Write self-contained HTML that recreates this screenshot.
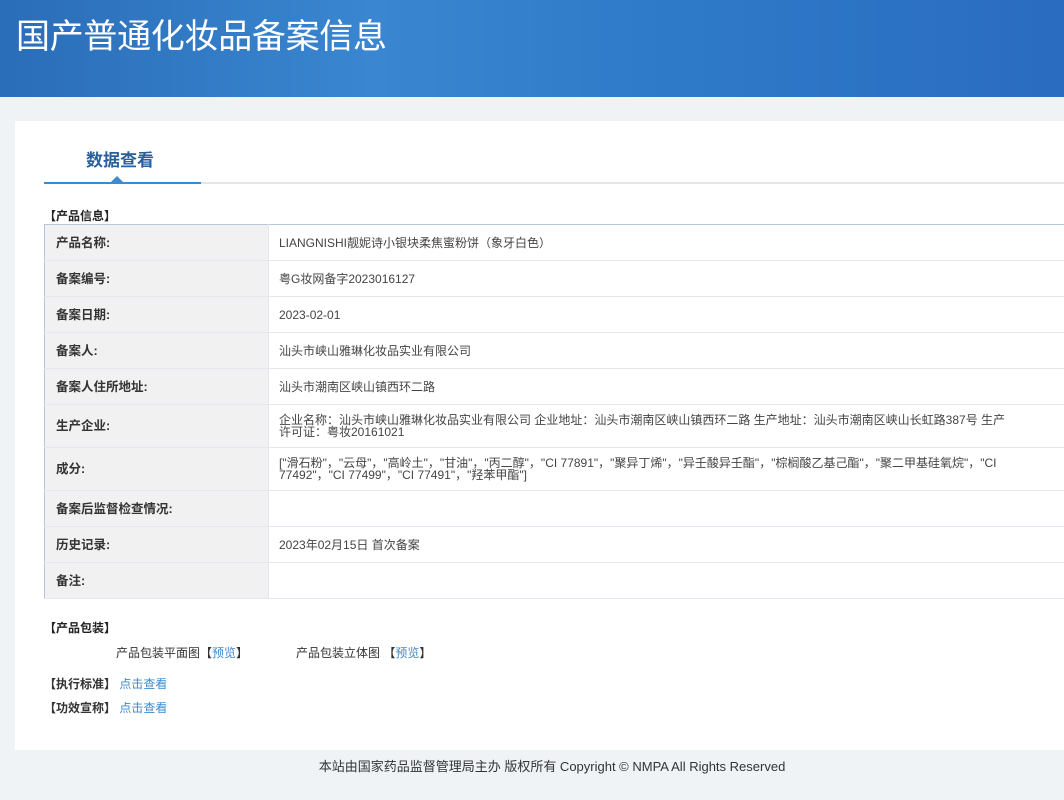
<!DOCTYPE html>
<html><head><meta charset="utf-8"><style>
*{margin:0;padding:0;box-sizing:border-box}
body{width:1064px;height:800px;overflow:hidden;background:#eff3f6;font-family:"Liberation Sans","Noto Sans CJK SC",sans-serif;font-size:12px;color:#333;position:relative}
.hd{position:absolute;left:0;top:0;width:1064px;height:97px;background:linear-gradient(90deg,#2a6db8 0%,#3a86d0 35%,#2f7bc9 60%,#2a6cc0 100%)}
.hd h1{position:absolute;left:16px;top:9px;font-size:34px;font-weight:normal;color:#fff;letter-spacing:-0.3px}
.card{position:absolute;left:15px;top:121px;width:1049px;height:629px;background:#fff}
.tab{position:absolute;left:86px;top:146px;font-size:17px;font-weight:bold;color:#2a5f9a}
.line{position:absolute;left:44px;top:182px;width:1020px;height:2px;background:#e6e6e6}
.line2{position:absolute;left:44px;top:182px;width:157px;height:2px;background:#3a8bd0}
.tri{position:absolute;left:111px;top:176px;width:0;height:0;border-left:6px solid transparent;border-right:6px solid transparent;border-bottom:6px solid #3a8bd0}
.sec{position:absolute;font-weight:bold;font-size:12px;color:#222}
table{position:absolute;left:44px;top:224px;width:1030px;border-collapse:collapse;border:1px solid #b7c6dc}
td{border-bottom:1px solid #e4e8ee;vertical-align:middle;font-size:12px;line-height:12px}
td.l{width:224px;background:#f1f1f1;font-weight:bold;padding-left:11px;color:#333;font-size:12.5px;border-right:1px solid #e4e8ee}
td.v{padding-left:10px;color:#444;padding-right:64px}
a{color:#3a8bd0;text-decoration:none}
.ft{position:absolute;top:756px;left:0;width:1104px;text-align:center;font-size:13px;color:#333}
</style></head><body>
<div class="hd"><h1>国产普通化妆品备案信息</h1></div>
<div class="card"></div>
<div class="tab">数据查看</div>
<div class="line"></div><div class="line2"></div><div class="tri"></div>
<div class="sec" style="left:44px;top:207px">【产品信息】</div>
<table>
<tr style="height:36px"><td class="l">产品名称:</td><td class="v">LIANGNISHI靓妮诗小银块柔焦蜜粉饼（象牙白色）</td></tr>
<tr style="height:36px"><td class="l">备案编号:</td><td class="v">粤G妆网备字2023016127</td></tr>
<tr style="height:36px"><td class="l">备案日期:</td><td class="v">2023-02-01</td></tr>
<tr style="height:36px"><td class="l">备案人:</td><td class="v">汕头市峡山雅琳化妆品实业有限公司</td></tr>
<tr style="height:36px"><td class="l">备案人住所地址:</td><td class="v">汕头市潮南区峡山镇西环二路</td></tr>
<tr style="height:43px"><td class="l">生产企业:</td><td class="v">企业名称：汕头市峡山雅琳化妆品实业有限公司 企业地址：汕头市潮南区峡山镇西环二路 生产地址：汕头市潮南区峡山长虹路387号 生产许可证：粤妆20161021</td></tr>
<tr style="height:43px"><td class="l">成分:</td><td class="v">["滑石粉"，"云母"，"高岭土"，"甘油"，"丙二醇"，"CI 77891"，"聚异丁烯"，"异壬酸异壬酯"，"棕榈酸乙基己酯"，"聚二甲基硅氧烷"，"CI 77492"，"CI 77499"，"CI 77491"，"羟苯甲酯"]</td></tr>
<tr style="height:36px"><td class="l">备案后监督检查情况:</td><td class="v"></td></tr>
<tr style="height:36px"><td class="l">历史记录:</td><td class="v">2023年02月15日 首次备案</td></tr>
<tr style="height:36px"><td class="l">备注:</td><td class="v"></td></tr>
</table>
<div class="sec" style="left:44px;top:619px">【产品包装】</div>
<div style="position:absolute;left:116px;top:644px">产品包装平面图【<a>预览</a>】</div>
<div style="position:absolute;left:296px;top:644px">产品包装立体图 【<a>预览</a>】</div>
<div style="position:absolute;left:44px;top:675px"><b>【执行标准】</b> <a>点击查看</a></div>
<div style="position:absolute;left:44px;top:699px"><b>【功效宣称】</b> <a>点击查看</a></div>
<div class="ft">本站由国家药品监督管理局主办 版权所有 Copyright © NMPA All Rights Reserved</div>
</body></html>
